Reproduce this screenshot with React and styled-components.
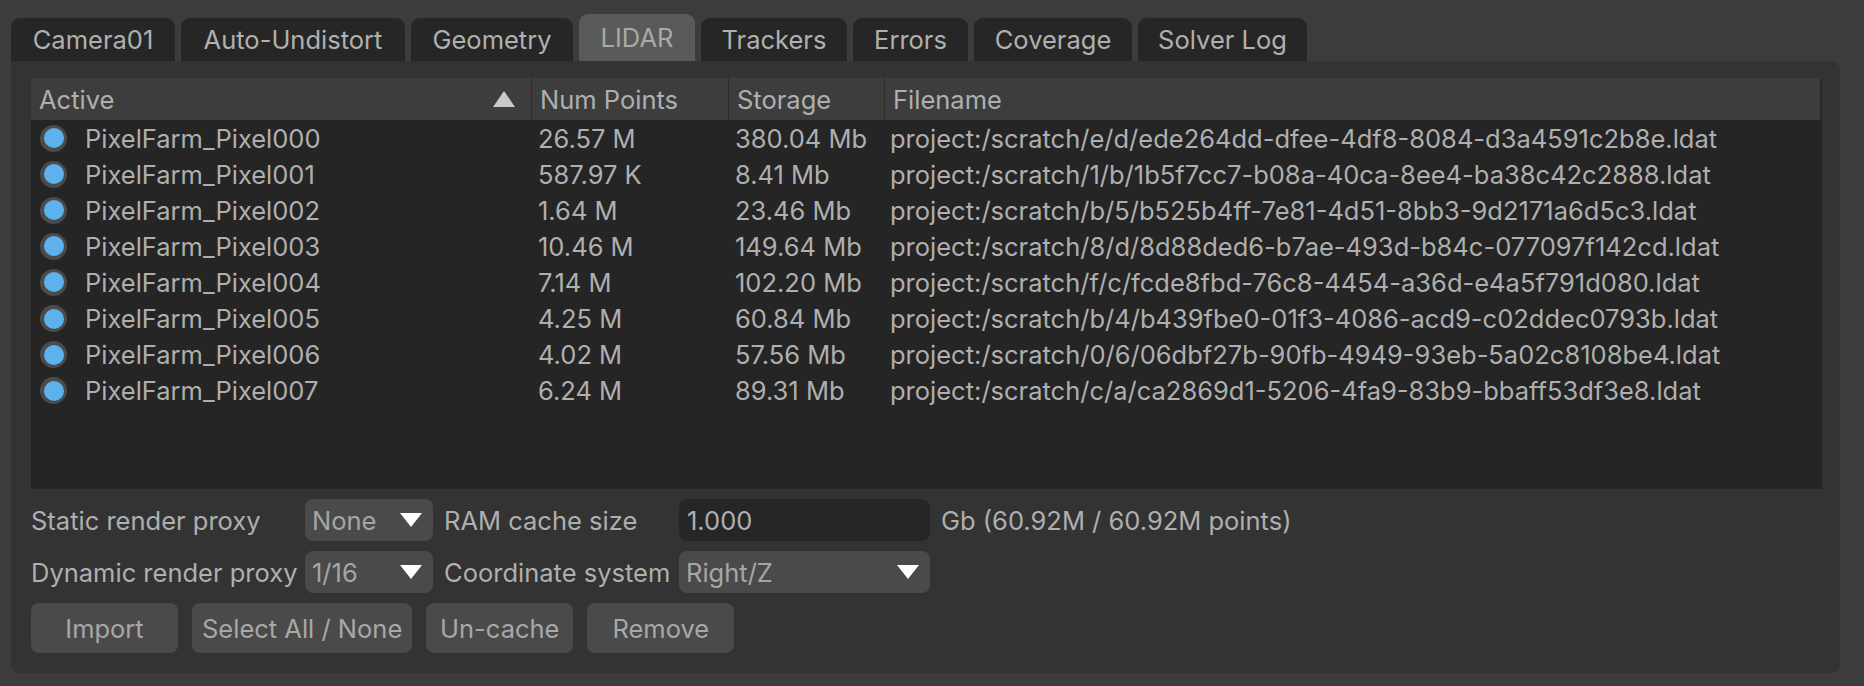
import React from "react";
import styled, { createGlobalStyle } from "styled-components";

const Global = createGlobalStyle`
  html, body { margin: 0; padding: 0; background: #3c3c3c; }
  body { font-family: Inter, "Liberation Sans", Arial, sans-serif; font-size: 25.5px; color: #afafaf; }
  * { box-sizing: border-box; }
`;

const Page = styled.div`
  width: 1864px;
  height: 686px;
  padding: 14px 0 0 11px;
  background: #3c3c3c;
  overflow: hidden;
`;

const TabBar = styled.div`
  display: flex;
  align-items: flex-end;
  gap: 6px;
  height: 47px;
`;

const Tab = styled.div`
  width: ${(p) => p.$w}px;
  height: ${(p) => (p.$active ? 47 : 43)}px;
  display: flex;
  align-items: center;
  justify-content: center;
  border-radius: 9px 9px 0 0;
  background: ${(p) => (p.$active ? "#5a5a5a" : "#262626")};
  color: ${(p) => (p.$active ? "#a9a9a9" : "#b0b0b0")};
  white-space: nowrap;
`;

const Panel = styled.div`
  width: 1829px;
  height: 612px;
  background: #333333;
  border-radius: 0 9px 9px 9px;
  padding: 17px 18px 0 20px;
  display: flex;
  flex-direction: column;
`;

const Table = styled.div`
  height: 411px;
  background: #252525;
  display: flex;
  flex-direction: column;
`;

const cols = "500px 197px 156px 1fr";

const HeaderRow = styled.div`
  display: grid;
  grid-template-columns: ${cols};
  height: 42px;
  background: #3d3d3d;
  border-right: 2px solid #2a2a2a;
`;

const HeaderCell = styled.div`
  display: flex;
  align-items: center;
  justify-content: space-between;
  padding: 0 16px 0 8px;
  border-left: ${(p) => (p.$first ? "none" : "1px solid #2b2b2b")};
  white-space: nowrap;
`;

const SortArrow = styled.span`
  width: 0;
  height: 0;
  border-left: 11px solid transparent;
  border-right: 11px solid transparent;
  border-bottom: 16px solid #c9c9c9;
`;

const Row = styled.div`
  display: grid;
  grid-template-columns: ${cols};
  height: 36.1px;
  align-items: center;
`;

const Cell = styled.div`
  display: flex;
  align-items: center;
  padding-left: ${(p) => p.$pl}px;
  white-space: nowrap;
`;

const Radio = styled.span`
  width: 27px;
  height: 27px;
  border-radius: 50%;
  background: #4b4b4b;
  display: flex;
  align-items: center;
  justify-content: center;
  margin-right: 18px;
  flex: none;
  &::after {
    content: "";
    width: 20px;
    height: 20px;
    border-radius: 50%;
    background: #5db2ee;
  }
`;

const Controls = styled.div`
  display: grid;
  grid-template-columns: 263px 128px 224px 251px 1fr;
  grid-template-rows: 42px 42px;
  column-gap: 11px;
  row-gap: 10px;
  margin-top: 10px;
  align-items: center;
`;

const Label = styled.div`
  white-space: nowrap;
`;

const Combo = styled.div`
  height: 42px;
  border-radius: 8px;
  background: #4a4a4a;
  display: flex;
  align-items: center;
  justify-content: space-between;
  padding: 0 11px 0 7px;
  color: #a6a6a6;
`;

const ComboArrow = styled.span`
  width: 0;
  height: 0;
  border-left: 11px solid transparent;
  border-right: 11px solid transparent;
  border-top: 14px solid #ffffff;
`;

const Input = styled.div`
  height: 42px;
  border-radius: 8px;
  background: #262626;
  display: flex;
  align-items: center;
  padding-left: 8px;
  color: #afafaf;
`;

const ButtonRow = styled.div`
  display: flex;
  gap: 14px;
  margin-top: 10px;
`;

const Button = styled.div`
  min-width: 147px;
  height: 50px;
  padding: 0 10px;
  border-radius: 8px;
  background: #4a4a4a;
  display: flex;
  align-items: center;
  justify-content: center;
  color: #a8a8a8;
  white-space: nowrap;
`;

const tabs = [
  ["Camera01", 164],
  ["Auto-Undistort", 224],
  ["Geometry", 162],
  ["LIDAR", 116, true],
  ["Trackers", 146],
  ["Errors", 115],
  ["Coverage", 158],
  ["Solver Log", 169],
];

const rows = [
  ["PixelFarm_Pixel000", "26.57 M", "380.04 Mb", "project:/scratch/e/d/ede264dd-dfee-4df8-8084-d3a4591c2b8e.ldat"],
  ["PixelFarm_Pixel001", "587.97 K", "8.41 Mb", "project:/scratch/1/b/1b5f7cc7-b08a-40ca-8ee4-ba38c42c2888.ldat"],
  ["PixelFarm_Pixel002", "1.64 M", "23.46 Mb", "project:/scratch/b/5/b525b4ff-7e81-4d51-8bb3-9d2171a6d5c3.ldat"],
  ["PixelFarm_Pixel003", "10.46 M", "149.64 Mb", "project:/scratch/8/d/8d88ded6-b7ae-493d-b84c-077097f142cd.ldat"],
  ["PixelFarm_Pixel004", "7.14 M", "102.20 Mb", "project:/scratch/f/c/fcde8fbd-76c8-4454-a36d-e4a5f791d080.ldat"],
  ["PixelFarm_Pixel005", "4.25 M", "60.84 Mb", "project:/scratch/b/4/b439fbe0-01f3-4086-acd9-c02ddec0793b.ldat"],
  ["PixelFarm_Pixel006", "4.02 M", "57.56 Mb", "project:/scratch/0/6/06dbf27b-90fb-4949-93eb-5a02c8108be4.ldat"],
  ["PixelFarm_Pixel007", "6.24 M", "89.31 Mb", "project:/scratch/c/a/ca2869d1-5206-4fa9-83b9-bbaff53df3e8.ldat"],
];

export default function App() {
  return (
    <>
      <Global />
      <Page>
        <TabBar>
          {tabs.map(([t, w, a]) => (
            <Tab key={t} $w={w} $active={a}>
              {t}
            </Tab>
          ))}
        </TabBar>
        <Panel>
          <Table>
            <HeaderRow>
              <HeaderCell $first>
                Active
                <SortArrow />
              </HeaderCell>
              <HeaderCell>Num Points</HeaderCell>
              <HeaderCell>Storage</HeaderCell>
              <HeaderCell>Filename</HeaderCell>
            </HeaderRow>
            {rows.map((r) => (
              <Row key={r[0]}>
                <Cell $pl={9}>
                  <Radio />
                  {r[0]}
                </Cell>
                <Cell $pl={7}>{r[1]}</Cell>
                <Cell $pl={7}>{r[2]}</Cell>
                <Cell $pl={6}>{r[3]}</Cell>
              </Row>
            ))}
          </Table>
          <Controls>
            <Label>Static render proxy</Label>
            <Combo>
              None
              <ComboArrow />
            </Combo>
            <Label>RAM cache size</Label>
            <Input>1.000</Input>
            <Label>Gb (60.92M / 60.92M points)</Label>
            <Label>Dynamic render proxy</Label>
            <Combo>
              1/16
              <ComboArrow />
            </Combo>
            <Label>Coordinate system</Label>
            <Combo>
              Right/Z
              <ComboArrow />
            </Combo>
            <div />
          </Controls>
          <ButtonRow>
            <Button>Import</Button>
            <Button>Select All / None</Button>
            <Button>Un-cache</Button>
            <Button>Remove</Button>
          </ButtonRow>
        </Panel>
      </Page>
    </>
  );
}
